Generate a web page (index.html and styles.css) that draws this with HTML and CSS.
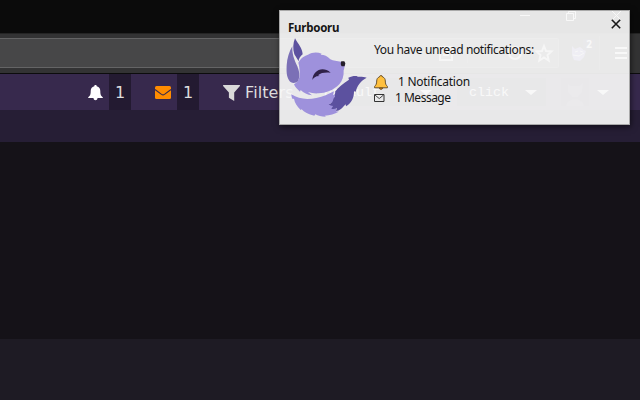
FILE: index.html
```
<!DOCTYPE html>
<html lang="en">
<head>
<meta charset="utf-8">
<title>Furbooru</title>
<link rel="stylesheet" href="styles.css">
</head>
<body>
<div class="screen">
  <div class="titlebar">
    <svg class="window-controls" width="102" height="12" viewBox="0 0 102 12" fill="none" stroke="#fff">
      <path d="M0 5.500h10M46.500 3.500h7v7h-7zM48.500 3v-1.500h7v7h-1.500M92 1l9 9M101 1l-9 9"/>
    </svg>
  </div>
  <div class="toolbar">
    <div class="urlbar">
      <svg width="124" height="20" viewBox="0 0 124 20" fill="none" stroke="#ddd" stroke-width="2">
        <path d="M8 4h12v13H8zM11 8h6M11 12h6"/>
        <path d="M35.500 0v20" stroke="#666" stroke-width="1"/>
        <circle cx="83" cy="10" r="6"/>
        <path d="M112 3l2 5 5.500.4-4 3.600 1.200 5.500-4.700-3-4.700 3 1.200-5.500-4-3.600 5.500-.4z"/>
      </svg>
    </div>
    <div class="extension">
      <svg width="16" height="16" viewBox="0 0 16 16"><path d="M1 1l3 3 5-2 4 3 2 1-2 6-4 4-6-1-2-5z" fill="#7b70c6"/><path d="M4 7l3-1M9 6l3 1M2 10l6 1 5-3" stroke="#eee" fill="none"/></svg>
      <span class="ext-badge">2</span>
    </div>
    <div class="menu"><svg width="12" height="12" viewBox="0 0 12 12"><path d="M0 1h12M0 6h12M0 11h12" stroke="#fff" stroke-width="2"/></svg></div>
  </div>
  <nav class="nav">
    <div class="icon bell"><svg width="15" height="16" viewBox="0 0 15 16" fill="#fff"><path d="M7.500 0c.8 0 1.200.5 1.200 1.200C11.300 1.800 12.300 4 12.300 6c0 4 .9 5 2.500 6.200V13H.2v-.8C1.800 11 2.700 10 2.700 6c0-2 1-4.200 3.600-4.800C6.300.5 6.700 0 7.500 0zM5.500 13h4c0 3-4 3-4 0z"/></svg></div>
    <div class="count">1</div>
    <div class="icon mail"><svg width="16" height="13" viewBox="0 0 16 13"><rect width="16" height="13" rx="1.500" fill="#ff8c00"/><path d="M0 3.500l6.500 4.900c1 .7 2 .7 3 0L16 3.500" fill="none" stroke="#37294d" stroke-width="1.100"/></svg></div>
    <div class="count">1</div>
    <div class="filters"><svg width="17" height="16" viewBox="0 0 17 16"><path d="M.1 0h16.800v1L11.200 7.500V16L5.900 12.800V7.500L.1 1z" fill="#d9d9d9"/></svg><span>Filters</span></div>
    <div class="select default"><span>Default</span><i class="caret"></i></div>
    <div class="select click"><span>click</span><i class="caret"></i></div>
    <div class="avatar"><svg width="28" height="28" viewBox="0 0 28 28"><path d="M7 6l3 2h8l4-3-1 9-4 5h-6l-4-5zM5 28c1-9 17-9 18 0z" fill="#443658"/></svg></div>
    <i class="caret"></i>
  </nav>
  <div class="subnav"></div>
  <main class="page"></main>
  <footer class="block"></footer>

  <aside class="toast">
    <div class="toast-head"><strong>Furbooru</strong>
      <svg class="close" width="10" height="10" viewBox="0 0 10 10"><path d="M.8.8l8.400 8.400M9.200.8L.8 9.200" stroke="#191919" stroke-width="1.600"/></svg>
    </div>
    <div class="toast-body">
      <svg class="logo" width="82" height="82" viewBox="18 20 246 246">
        <path d="M45 24c-6 14-7 32-2 48l13 21c0-8 5-15 12-21-1-19-13-30-23-48z" fill="#5c519f"/>
        <path d="M55 97c8-16 19-20 29-24 12-8 28-9 41-3l-3 3c11 0 20 4 29 14 9 5 20 5 32 7l11 5c0 10-1 16-3 21 1 18-4 32-13 42-19 19-42 27-62 27-13 1-22-1-32-4l12 10c-14-2-25-7-34-16l-2 5c-8-8-15-14-18-22 13-8 17-17 17-31 0-12-1-24-4-34z" fill="#9e91dc"/>
        <path d="M37 48c-9 15-16 35-17 57-1 21 0 34 7 45 6 10 20 10 27 2 7-13 4-29-2-44-10-21-16-37-15-60z" fill="#7b70b6"/>
        <path d="M34 192c22 15 48 16 75 11 21-4 36-11 53-20l-3 12 7-4-6 24-12 6 12 5-4 8 14-1-2 10 8 1c-12 7-26 10-42 12l4 3c-14 0-24-2-32-7l-3 4c-18-3-31-11-38-19l-3 2c-11-12-18-22-20-34l-4 1c-3-4-4-8-4-14z" fill="#9e91dc"/>
        <path d="M164 186c10-15 27-27 43-38l-2-6c11-5 20-6 29-4l-4 2c13-2 20 0 30 2-17 9-28 23-33 42l-5-1c0 20-7 35-24 45l-1-6c-10 11-18 20-29 20l3-9c-6 3-12 4-17 2l5-8c-5 0-9-1-13-5 10-3 13-9 14-16l5-8c-1-5 0-8 1-12z" fill="#5c519f"/>
        <path d="M97 149c2-29 31-43 55-22-18-1-29 0-38 8l5 2-9 1c-6 3-10 6-13 11z" fill="#2f2148"/>
        <path d="M184 93h9l3 6-2 9h-9c-4-4-3-11-1-15z" fill="#241d2a"/>
      </svg>
      <div class="toast-text">
        <p class="lead">You have unread notifications:</p>
        <p class="row"><svg width="14" height="15" viewBox="0 0 14 15"><path d="M5.300 12.500h3.500c0 2.500-3.500 2.500-3.500 0z" fill="#d58412" stroke="#493416" stroke-width=".7"/><path d="M7 .6c1 0 1.400.5 1.500 1.300C10.400 2.500 11.300 4 11.300 6c0 3 .8 4 2.100 5.500v1.300H.6v-1.300C1.900 10 2.700 9 2.700 6c0-2 .9-3.500 2.800-4.100C5.600 1.100 6 .6 7 .6z" fill="#ffc03e" stroke="#493416" stroke-width=".8"/></svg><span class="notification">1 Notification</span></p>
        <p class="row"><svg width="11" height="8" viewBox="0 0 11 8"><path d="M.5.5h9.500v7H.5z" fill="none" stroke="#333"/><path d="M1 1l4.250 3.600L9.500 1" fill="none" stroke="#333" stroke-width=".9"/></svg><span class="message">1 Message</span></p>
      </div>
    </div>
  </aside>
</div>
</body>
</html>
```
FILE: styles.css
```
* { box-sizing: border-box; }
body { margin: 0; background: #151218; }
p { margin: 0; }
svg { display: block; flex: none; }
.screen { position: relative; width: 640px; height: 400px; overflow: hidden; display: flex; flex-direction: column; }
.titlebar { height: 33px; flex: none; background: #0b0b0b; display: flex; justify-content: flex-end; padding: 10px 18px 0 0; }
.toolbar { height: 41px; flex: none; background: #333334; border-bottom: 1px solid #0c0c0d; border-top: 1px solid #242424; display: flex; padding-top: 4px; }
.urlbar { width: 559px; height: 30px; background: #474748; border: 1px solid #646465; border-left: 0; border-radius: 0 2px 2px 0; display: flex; justify-content: flex-end; align-items: center; padding-right: 2px; }
.extension { width: 41px; height: 34px; margin-top: -2px; padding: 9px 0 0 12px; border-right: 1px solid #4c4c4d; display: flex; }
.ext-badge { width: 12px; height: 11px; margin: -6px 0 0 -4px; background: #303050; color: #fff; font: bold 10px/11px "Open Sans", sans-serif; text-align: center; }
.menu { padding: 9px 0 0 15px; }
.nav { height: 36px; flex: none; background: #37294d; display: flex; align-items: center; color: #dedede; font: 16px/36px "DejaVu Sans", sans-serif; }
.bell { width: 109px; padding: 1px 0 0 88px; }
.mail { width: 46px; padding-left: 24px; }
.count { width: 22px; height: 36px; background: #231a31; text-align: center; padding-top: 1px; }
.filters { width: 115px; padding: 1px 0 0 24px; display: flex; align-items: center; gap: 5px; white-space: nowrap; }
.filters span { padding-top: 1px; letter-spacing: .1px; }
.select { height: 28px; background: #261e35; color: #fff; display: flex; align-items: center; justify-content: space-between; padding-right: 9px; font: 13.330px "Liberation Mono", monospace; }
.default { width: 127px; padding-left: 10px; }
.click { width: 89px; margin-left: 16px; padding-left: 12px; }
.caret { width: 0; height: 0; border: 6px solid transparent; border-top: 5px solid #fff; border-bottom: 0; }
.avatar { margin: 0 8px 0 15px; background: #2c213b; }
.subnav { height: 32px; flex: none; background: #261e35; }
.page { height: 197px; flex: none; background: #151218; }
.block { flex: 1; background: #1e1b24; }
.toast { position: absolute; left: 279px; top: 10px; width: 351px; height: 115px; background: rgba(247,247,247,.93); border: 1px solid #a9a9a9; box-shadow: 1px 2px 6px rgba(0,0,0,.55); color: #151515; font: 12px/16px "Noto Sans", sans-serif; }
.toast-head { height: 26px; padding: 8px 8px 0; display: flex; justify-content: space-between; }
.toast-head strong { font-size: 11.500px; line-height: 18px; letter-spacing: -.25px; }
.toast-body { display: flex; padding-left: 6px; }
.toast-text { padding: 4px 0 0 6px; white-space: nowrap; }
.lead { height: 33px; padding-top: 1px; letter-spacing: -.36px; }
.row { height: 16px; display: flex; align-items: center; }
.notification { margin-left: 10px; letter-spacing: -.27px; }
.message { margin-left: 10px; letter-spacing: -.5px; }
```
